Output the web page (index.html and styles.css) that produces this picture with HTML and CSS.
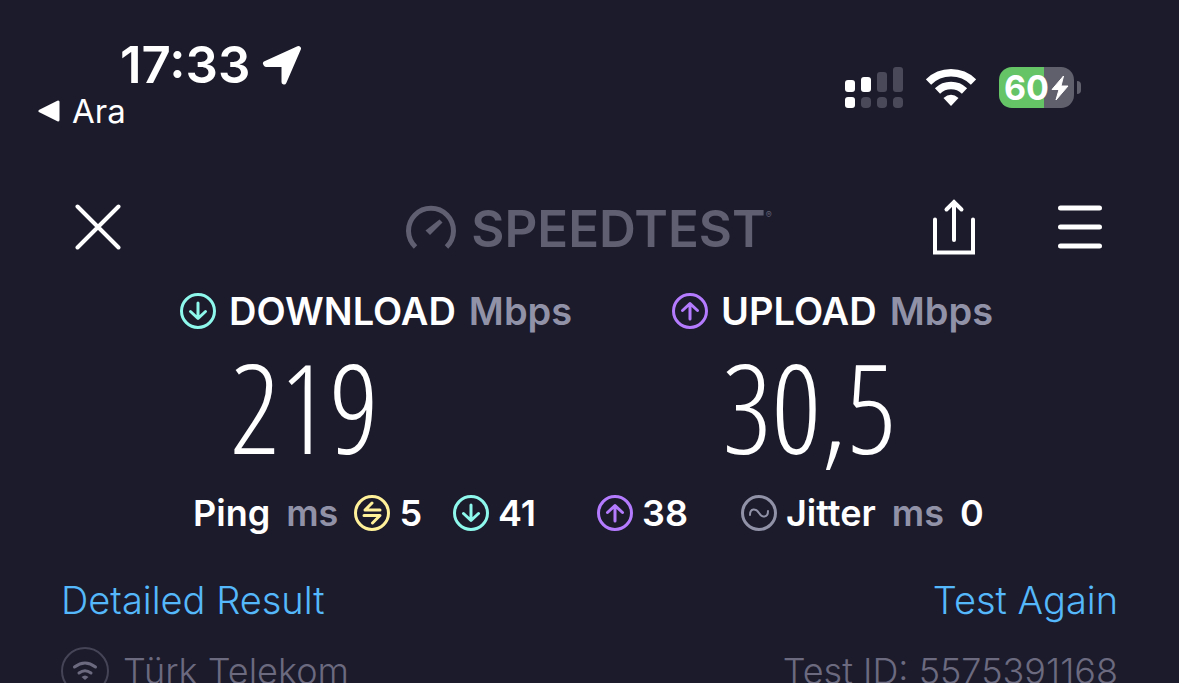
FILE: index.html
```
<!doctype html>
<html lang="en">
<head>
  <meta charset="utf-8">
  <meta name="viewport" content="width=device-width, initial-scale=1">
  <title>Speedtest</title>
  <link rel="stylesheet" href="styles.css">
</head>
<body>

  <!-- icons used more than once -->
  <svg class="defs" width="0" height="0">
    <symbol id="down" viewBox="0 0 36 36">
      <circle cx="18" cy="18" r="16.5"/>
      <path d="M18 10v15M10.5 18.5L18 25.5l7.500-7"/>
    </symbol>
    <symbol id="up" viewBox="0 0 36 36">
      <circle cx="18" cy="18" r="16.5"/>
      <path d="M18 26V10.500M10.500 17.500L18 10.500l7.500 7"/>
    </symbol>
  </svg>

  <header class="status">
    <div class="status-left">
      <div class="clock">
        <span class="time">17:33</span>
        <svg class="location" width="40" height="40" viewBox="0 0 40 40">
          <path d="M3.500 18.500L36.500 3.500L22 37V19.500H4z" fill="#fff" stroke="#fff" stroke-width="5" stroke-linejoin="round"/>
        </svg>
      </div>
      <a class="back" href="#">
        <svg width="22" height="22" viewBox="0 0 22 22">
          <path d="M2 11L20 2v18z" fill="#fff" stroke="#fff" stroke-width="3" stroke-linejoin="round"/>
        </svg>
        <span>Ara</span>
      </a>
    </div>
    <div class="status-right">
      <svg width="58" height="41" viewBox="0 0 58 41">
        <g fill="#fff">
          <rect x="0" y="13" width="10" height="12" rx="3"/>
          <rect x="16" y="10" width="10" height="15" rx="3"/>
          <rect x="0" y="30" width="10" height="11" rx="3"/>
        </g>
        <g fill="#4a4959">
          <rect x="32" y="5" width="10" height="20" rx="3"/>
          <rect x="48" y="0" width="10" height="25" rx="3"/>
          <rect x="16" y="30" width="10" height="11" rx="4"/>
          <rect x="32" y="30" width="10" height="11" rx="4"/>
          <rect x="48" y="30" width="10" height="11" rx="4"/>
        </g>
      </svg>
      <svg width="50" height="37" viewBox="0 0 50 37">
        <path d="M2.500 13A32 32 0 0 1 47.500 13M11.500 22A19.500 19.500 0 0 1 38.500 22" fill="none" stroke="#fff" stroke-width="7.500"/>
        <path d="M17.500 29Q25 22.500 32.500 29L25 37z" fill="#fff"/>
      </svg>
      <div class="battery">
        <div class="battery-body">
          <span>60</span>
          <svg width="18" height="26" viewBox="0 0 18 26">
            <path d="M12.500 1L1 14.500H8L5 25L17 11H10z" fill="#fff" stroke="#fff" stroke-linejoin="round"/>
          </svg>
        </div>
        <div class="battery-tip"></div>
      </div>
    </div>
  </header>

  <nav class="toolbar">
    <button class="icon-btn" aria-label="Close">
      <svg width="46" height="46" viewBox="0 0 46 46">
        <path d="M2.500 2.500l41 41M43.500 2.500l-41 41"/>
      </svg>
    </button>
    <div class="logo">
      <svg width="52" height="48" viewBox="0 -2 52 48">
        <path d="M10.500 40A22.500 22.500 0 1 1 41.500 40" fill="none" stroke="#5f5f71" stroke-width="5"/>
        <path d="M34.500 12.500L37.500 15.500L25 28L20.500 23.500z" fill="#5f5f71"/>
      </svg>
      <span class="logo-name">SPEEDTEST</span><sup>®</sup>
    </div>
    <div class="actions">
      <button class="icon-btn" aria-label="Share">
        <svg width="42" height="56" viewBox="0 0 42 56">
          <path d="M2 20.500V53.500H40V20.500M21 41V3M13.500 10.500L21 3l7.500 7.500"/>
        </svg>
      </button>
      <button class="icon-btn" aria-label="Menu">
        <svg class="menu" width="44" height="44" viewBox="0 0 44 44">
          <path d="M2.500 3h39M2.500 22h39M2.500 41h39"/>
        </svg>
      </button>
    </div>
  </nav>

  <main>
    <section class="results">
      <div class="result">
        <h2><svg class="icon cyan"><use href="#down"/></svg>DOWNLOAD <small>Mbps</small></h2>
        <p class="speed">219</p>
      </div>
      <div class="result">
        <h2><svg class="icon purple"><use href="#up"/></svg>UPLOAD <small>Mbps</small></h2>
        <p class="speed">30,5</p>
      </div>
    </section>

    <section class="latency">
      <div class="stat">
        <span>Ping</span> <small>ms</small>
        <svg class="icon yellow" viewBox="0 0 36 36">
          <circle cx="18" cy="18" r="16.5"/>
          <path d="M26 15H11L18 8M10 20.500H26L18.500 28"/>
        </svg>
        <span>5</span>
      </div>
      <div class="stat"><svg class="icon cyan"><use href="#down"/></svg><span>41</span></div>
      <div class="stat"><svg class="icon purple"><use href="#up"/></svg><span>38</span></div>
      <div class="stat">
        <svg class="icon gray" viewBox="0 0 36 36">
          <circle cx="18" cy="18" r="16.5"/>
          <path class="wave" d="M9 20C9 13 15 13 18 18S27 23 27 16"/>
        </svg>
        <span>Jitter</span> <small>ms</small> <span>0</span>
      </div>
    </section>

    <section class="links">
      <a href="#">Detailed Result</a>
      <a href="#">Test Again</a>
    </section>

    <section class="provider">
      <div class="isp">
        <svg width="48" height="48" viewBox="0 0 48 48">
          <circle cx="24" cy="24" r="23" fill="none" stroke="#454456" stroke-width="2"/>
          <path d="M13.500 20Q24 12 34.500 20M18 26Q24 21.500 30 26" fill="none" stroke="#6b6a7f" stroke-width="3" stroke-linecap="round"/>
          <path d="M20.500 30Q24 27 27.500 30L24 33z" fill="#6b6a7f"/>
        </svg>
        <span>Türk Telekom</span>
      </div>
      <span>Test ID: 5575391168</span>
    </section>
  </main>

</body>
</html>
```
FILE: styles.css
```
* {
  box-sizing: border-box;
}
body {
  margin: 0;
  background: #1b1b2c;
  color: #fff;
  font-family: Inter, "Liberation Sans", sans-serif;
  overflow: hidden;
}
a {
  color: inherit;
  text-decoration: none;
}
svg {
  display: block;
  flex: none;
}
.defs {
  position: absolute;
}

/* phone status bar */
.status {
  display: flex;
  justify-content: space-between;
  padding: 40px 98px 0 38px;
}
.clock {
  display: flex;
  align-items: center;
  gap: 12px;
  padding-left: 82px;
}
.time {
  font-size: 51px;
  line-height: 50px;
  font-weight: 600;
}
.back {
  display: flex;
  align-items: center;
  gap: 12px;
  font-size: 33px;
  line-height: 42px;
}
.status-right {
  display: flex;
  align-items: center;
  gap: 23px;
  height: 41px;
  margin-top: 27px;
}
.battery {
  display: flex;
  align-items: center;
  gap: 3px;
}
.battery-body {
  display: flex;
  align-items: center;
  justify-content: center;
  gap: 2px;
  width: 75px;
  height: 41px;
  border-radius: 13px;
  background: linear-gradient(to right, #65c466 60%, #605f6c 60%);
  font-size: 34px;
  font-weight: 700;
}
.battery-tip {
  width: 4px;
  height: 13px;
  border-radius: 0 4px 4px 0;
  background: #605f6c;
}

/* toolbar */
.toolbar {
  display: grid;
  grid-template-columns: 1fr auto 1fr;
  align-items: center;
  padding: 0 77px 0 75px;
  margin-top: 65px;
}
.icon-btn {
  justify-self: start;
  padding: 0;
  border: 0;
  background: none;
  cursor: pointer;
}
.icon-btn path {
  fill: none;
  stroke: #fff;
  stroke-width: 4;
  stroke-linecap: round;
}
.icon-btn .menu path {
  stroke-width: 5;
}
.logo {
  display: flex;
  align-items: center;
  padding-top: 4px;
  color: #5f5f71;
}
.logo-name {
  margin-left: 14px;
  font-size: 51px;
  line-height: 56px;
  font-weight: 600;
}
.logo sup {
  align-self: flex-start;
  font-size: 9px;
  line-height: 12px;
  margin-top: 8px;
}
.actions {
  display: flex;
  align-items: center;
  justify-content: flex-end;
  gap: 83px;
}

/* speeds */
.icon {
  width: 36px;
  height: 36px;
  fill: none;
  stroke: currentColor;
  stroke-width: 3;
  stroke-linecap: round;
  stroke-linejoin: round;
}
.icon .wave {
  stroke-width: 2;
}
.cyan {
  color: #8ff8ec;
}
.purple {
  color: #b57bff;
}
.yellow {
  color: #fff09a;
}
.gray {
  color: #9192a8;
}
small {
  font-size: inherit;
  color: #9192a8;
}
.results {
  display: grid;
  grid-template-columns: 492fr 323fr;
  padding: 0 184px 0 180px;
  margin-top: 34px;
}
.result h2 {
  display: flex;
  align-items: center;
  gap: 13px;
  margin: 0;
  font-size: 38px;
  line-height: 40px;
  font-weight: 600;
  white-space: nowrap;
}
.speed {
  margin: 0;
  padding: 0 0 12px 50px;
  font-family: "Open Sans Condensed Light", "Open Sans", sans-serif;
  font-size: 124px;
  line-height: 150px;
  font-weight: 300;
}

/* ping and jitter */
.latency {
  display: grid;
  grid-template-columns: 260fr 144fr 144fr 245fr;
  padding: 0 193px;
  font-size: 36px;
  line-height: 40px;
  font-weight: 600;
}
.stat {
  display: flex;
  align-items: center;
  gap: 9px;
}
.stat small {
  margin: 0 7px;
}

/* links and provider */
.links,
.provider {
  display: flex;
  justify-content: space-between;
  padding: 0 61px;
  font-size: 36px;
  line-height: 48px;
  font-weight: 300;
}
.links {
  margin-top: 43px;
  font-size: 38px;
  color: #55b8fa;
}
.provider {
  margin-top: 23px;
  color: #6b6a7f;
}
.isp {
  display: flex;
  gap: 14px;
}
```
